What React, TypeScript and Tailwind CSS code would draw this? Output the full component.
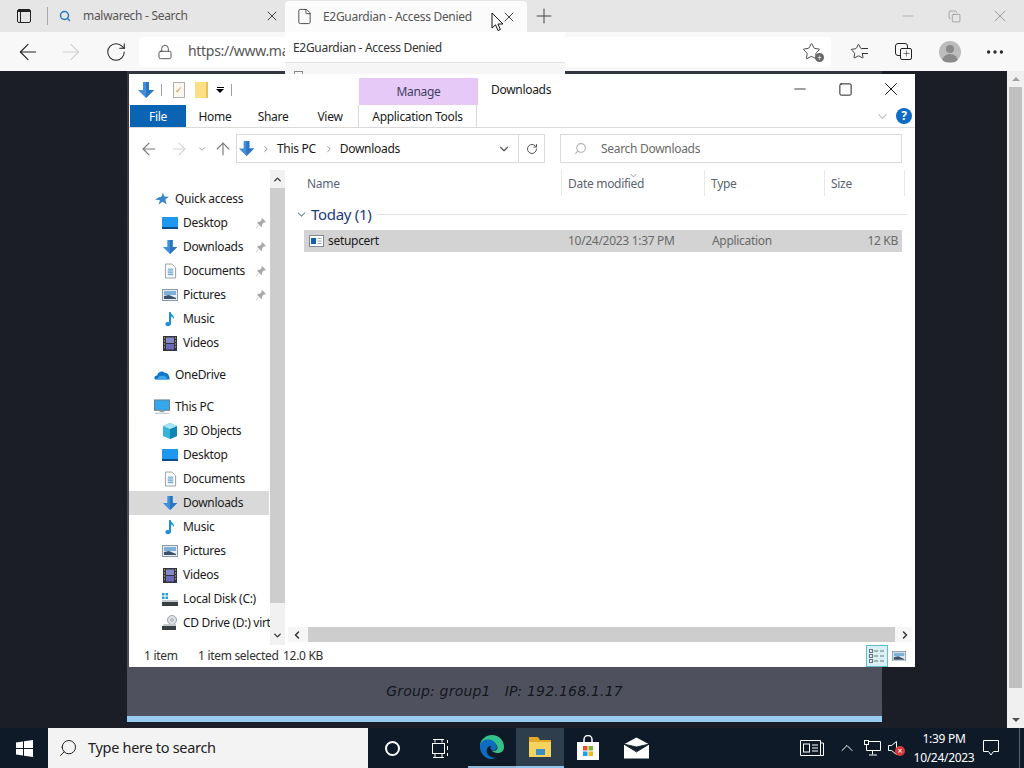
import type { ReactNode } from 'react';
import { ArrowLeft, ArrowRight, RotateCw, Lock, Search, X, Plus, File, ChevronDown, ChevronUp, ChevronLeft, ChevronRight, ArrowUp, Minus, Square, Copy, Star, Ellipsis, RotateCw as Refresh } from 'lucide-react';

const ArrowDownBlue = ({ s = 18 }: { s?: number }) => (
  <svg width={s} height={s} viewBox="0 0 18 18"><path d="M6 1h6v8h5l-8 8-8-8h5z" fill="#3f8fdc" /><path d="M9 1h3v8h5l-8 8z" fill="#2a74c0" /></svg>
);
const DesktopIcon = () => (
  <svg width="16" height="14" viewBox="0 0 16 14"><rect x="0" y="1" width="16" height="11" fill="#1f97ee" /><rect x="0" y="11" width="16" height="2" fill="#0c4f8c" /></svg>
);
const DocIcon = () => (
  <svg width="13" height="16" viewBox="0 0 14 16"><path d="M1.500.5h7l4 4v11h-11z" fill="#fff" stroke="#8a9aa8" /><path d="M4 6h6M4 8h6M4 10h6M4 12h6" stroke="#4a8ab8" /></svg>
);
const PicIcon = ({ w = 16 }: { w?: number }) => (
  <svg width={w} height={w * 0.75} viewBox="0 0 16 12"><rect x=".5" y=".5" width="15" height="11" fill="#e8eef4" stroke="#8a9aa8" /><rect x="2" y="2" width="12" height="4" fill="#7fb0d8" /><path d="M2 10V7l5-1 7 3v1z" fill="#38536a" /></svg>
);
const MusicIcon = () => (
  <svg width="14" height="16" viewBox="0 0 14 16"><path d="M6 1h1.600c.3 2.600 4.400 3.600 3.400 7.400C10.600 6.500 9 5.600 8 5.400V12.500C8 14.500 5.800 15.600 4 15.100 2 14.500 1.800 12 3.600 11.200 4.500 10.800 5.400 10.900 6 11.200z" fill="#1c8fd8" /></svg>
);
const VideoIcon = () => (
  <svg width="14" height="15" viewBox="0 0 14 15"><rect width="14" height="15" fill="#33333b" /><rect x="3" y="1.500" width="8" height="5.500" fill="#8888c8" /><rect x="3" y="8" width="8" height="5.500" fill="#6a68b8" /><path d="M1 2h1M1 5h1M1 8h1M1 11h1M12 2h1M12 5h1M12 8h1M12 11h1" stroke="#e8d878" /></svg>
);
const CubeIcon = () => (
  <svg width="16" height="16" viewBox="0 0 16 16"><path d="M8 0l7 3v10l-7 3-7-3V3z" fill="#34b4d8" /><path d="M8 6l7-3v10l-7 3z" fill="#0f86b8" /><path d="M8 0l7 3-7 3-7-3z" fill="#a8e4f4" /></svg>
);
const DiskIcon = () => (
  <svg width="16" height="15" viewBox="0 0 16 15"><path d="M0 1h2.500v2.500H0zM3.500 1H6v2.500H3.500zM0 4.500h2.500V7H0zM3.500 4.500H6V7H3.500z" fill="#21a0d8" /><rect y="8" width="16" height="2" fill="#c8ccd0" /><rect y="10" width="16" height="4" fill="#3a3f44" /></svg>
);
const CdIcon = () => (
  <svg width="16" height="16" viewBox="0 0 16 16"><circle cx="10" cy="5" r="4.500" fill="#dfe3e6" stroke="#9aa0a6" /><circle cx="10" cy="5" r="1.300" fill="#fff" stroke="#9aa0a6" /><path d="M2 9h12v2H0z" fill="#c8ccd0" /><rect y="11" width="14" height="4" fill="#3a3f44" /></svg>
);
const StarIcon = () => (
  <svg width="14" height="14" viewBox="0 0 14 14"><path d="M8 .5l1.300 4 4.700.2-3.700 2.900 1.300 4.900-3.900-2.800-4.200 2.800 1.500-4.300L0 7.500l3.900-2.300 2.300-.2z" fill="#3a86c8" /></svg>
);
const CloudIcon = () => (
  <svg width="18" height="12" viewBox="0 0 18 12"><path d="M1 11C-.5 8.500 1 6.500 3.500 6.500 4.500 2.500 9 .5 12 3.500c3-.5 6 3.500 5.500 7.500z" fill="#0f78c8" /><path d="M4 11c0-3 3-5 5.500-4 2-1 5 1 5.500 4z" fill="#3ea4e8" /></svg>
);
const MonitorIcon = () => (
  <svg width="17" height="16" viewBox="0 0 17 16"><rect x=".5" y=".5" width="16" height="11" fill="#34a8ec" stroke="#6a7a88" /><path d="M6 12h5v1.500H6z" fill="#98a2aa" /><path d="M1 14h15v1.500H1z" fill="#c8ced4" /></svg>
);
const PinIcon = () => (
  <svg width="10" height="10" viewBox="0 0 10 10"><path d="M6 0l4 4-1 .6-1-.3L6 6.500 6.200 8 5 9 3.200 6.800 0.500 10 0 9.500 3.200 6.800 1 5l1-1.200 1.500.2L5.700 2 5.400 1z" fill="#a8a8a8" /></svg>
);
const AppIcon = () => (
  <svg width="15" height="12" viewBox="0 0 15 12"><rect x=".5" y=".5" width="14" height="11" fill="#fff" stroke="#7f8a96" /><rect x="2" y="3" width="5" height="6" fill="#1560ac" /><path d="M8.500 3.500h4M8.500 6h4M8.500 8.500h4" stroke="#9aa6b0" /></svg>
);
const DetailsIcon = () => (
  <svg width="16" height="14" viewBox="0 0 16 14" fill="none" stroke="#707070"><rect x=".5" y=".5" width="3" height="3" /><rect x=".5" y="5.500" width="3" height="3" /><rect x=".5" y="10.500" width="3" height="3" /><path d="M5 2h4M11 2h4M5 7h4M11 7h4M5 12h4M11 12h4" /></svg>
);

const WinLogo = () => (
  <svg width="17" height="17" viewBox="0 0 17 17" fill="#fff"><path d="M0 2.400L7 1.400V8H0zM8 1.200L17 0V8H8zM0 9h7v6.600L0 14.600zM8 9h9v8L8 15.800z" /></svg>
);
const EdgeLogo = () => (
  <svg width="26" height="26" viewBox="0 0 26 26">
    <path d="M13 1C20 1 25 6 25 13c0 4-3 6-6.500 6-3 0-5-1.200-5.500-2.500 4 1 6-1.500 5.500-3.500C17.500 9.500 14 7.500 10.500 8 5.500 9 3 13 3 17 1.500 14 1 12.500 1 11 1.500 5.500 7 1 13 1z" fill="#35c28a" />
    <path d="M1 11c1-4 5-6 9-5.500 4 .5 8 3.500 8 7.500 0 2-2 3.500-5 3.500-1.500-1-2-3-1-4.500-3-.5-5 3-4 6.500 1 3 4 6 9 5-2 1-3.500 1.500-5 1.500C6 25 1 19 1 13z" fill="#0c6dc0" />
  </svg>
);
const FolderLogo = () => (
  <svg width="24" height="22" viewBox="0 0 24 22"><path d="M1 1h9l2 3h11v4H1z" fill="#e3a92a" /><rect x="1" y="6" width="22" height="15" fill="#f6d35e" /><rect x="8" y="13" width="9" height="6" fill="#3f8cc0" /></svg>
);
const StoreLogo = () => (
  <svg width="24" height="26" viewBox="0 0 24 26"><path d="M8 7V4.500a4 4 0 018 0V7" fill="none" stroke="#fff" strokeWidth="1.500" /><rect x="1" y="7" width="22" height="18" fill="#fff" /><rect x="7" y="11" width="4.500" height="4.500" fill="#e8502a" /><rect x="12.500" y="11" width="4.500" height="4.500" fill="#7cb82a" /><rect x="7" y="16.500" width="4.500" height="4.500" fill="#1da1e8" /><rect x="12.500" y="16.500" width="4.500" height="4.500" fill="#f8b81a" /></svg>
);
const MailLogo = () => (
  <svg width="25" height="22" viewBox="0 0 26 22"><path d="M0 7l13-7 13 7v15H0z" fill="#fff" /><path d="M0 7l13 8 13-8-13 3z" fill="#10202e" stroke="#10202e" strokeWidth="1" /></svg>
);
const TaskViewIcon = () => (
  <svg width="17" height="19" viewBox="0 0 17 19" fill="none" stroke="#fff"><path d="M1 .5h11M3 .5v3M10 .5v3M1 18.500h11M3 15v3.500M10 15v3.500" /><rect x=".5" y="4.500" width="12" height="10" /><path d="M15.500 1v3M15.500 7v4M15.500 14v3" /></svg>
);
const NewsIcon = () => (
  <svg width="24" height="16" viewBox="0 0 24 16" fill="none" stroke="#fff"><path d="M.5.5h20v15H.5zM20.500 3h3v12.500h-3" /><rect x="3.500" y="4" width="6" height="8" /><path d="M12 5h6M12 8h6M12 11h6" /></svg>
);
const NetworkIcon = () => (
  <svg width="17" height="16" viewBox="0 0 17 16" fill="none" stroke="#fff"><path d="M5 1.500h11.500v9H5M8.500 10.500v4M5 15h8" /><rect x=".5" y=".5" width="4" height="4" /><path d="M2.500 4.500v6H5" /></svg>
);
const SpeakerIcon = () => (
  <svg width="10" height="14" viewBox="0 0 10 14" fill="none" stroke="#fff"><path d="M.5 4.500h3l5-4v13l-5-4h-3z" /></svg>
);
const BubbleIcon = () => (
  <svg width="16" height="16" viewBox="0 0 16 16" fill="none" stroke="#fff"><path d="M.5.5h15v11h-5l-2.500 3.500-2.500-3.500h-5z" /></svg>
);

const navRows: { label: string; icon: ReactNode; top?: boolean; pin?: boolean; sel?: boolean; gap?: boolean }[] = [
  { label: 'Quick access', icon: <StarIcon />, top: true },
  { label: 'Desktop', icon: <DesktopIcon />, pin: true },
  { label: 'Downloads', icon: <ArrowDownBlue s={16} />, pin: true },
  { label: 'Documents', icon: <DocIcon />, pin: true },
  { label: 'Pictures', icon: <PicIcon />, pin: true },
  { label: 'Music', icon: <MusicIcon /> },
  { label: 'Videos', icon: <VideoIcon /> },
  { label: 'OneDrive', icon: <CloudIcon />, top: true, gap: true },
  { label: 'This PC', icon: <MonitorIcon />, top: true, gap: true },
  { label: '3D Objects', icon: <CubeIcon /> },
  { label: 'Desktop', icon: <DesktopIcon /> },
  { label: 'Documents', icon: <DocIcon /> },
  { label: 'Downloads', icon: <ArrowDownBlue s={16} />, sel: true },
  { label: 'Music', icon: <MusicIcon /> },
  { label: 'Pictures', icon: <PicIcon /> },
  { label: 'Videos', icon: <VideoIcon /> },
  { label: 'Local Disk (C:)', icon: <DiskIcon /> },
  { label: 'CD Drive (D:) virtio-win', icon: <CdIcon /> },
];

function Explorer() {
  return (
    <div className="absolute left-[129px] top-[3px] w-[786px] h-[593px] bg-white flex flex-col text-[12px] text-[#1a1a1a]">
      {/* title bar */}
      <div className="h-[31px] flex shrink-0">
        <div className="w-[230px] flex items-center pl-[8px]">
          <ArrowDownBlue />
          <div className="w-px h-[12px] bg-[#a0a0a0] ml-[6px]" />
          <div className="ml-[11px] w-[12px] h-[16px] border border-[#b0b0b0] bg-[#fbf7ef] flex items-center justify-center text-[9px] text-[#d8902a]">✓</div>
          <div className="ml-[10px] w-[13px] h-[16px] bg-[#fbdf85] border-r-2 border-[#e8bf50]" />
          <div className="ml-[8px] flex flex-col items-center gap-[1px]">
            <div className="w-[7px] h-px bg-black" />
            <div className="w-0 h-0 border-l-[4px] border-r-[4px] border-t-[4px] border-l-transparent border-r-transparent border-t-black" />
          </div>
          <div className="w-px h-[12px] bg-[#a0a0a0] ml-[7px]" />
        </div>
        <div className="w-[119px] h-[27px] self-end bg-[#e6c9f6] flex items-center justify-center text-[#3f3f5f]">Manage</div>
        <div className="ml-[13px] pt-[7px]">Downloads</div>
        <div className="ml-auto mr-px flex h-[30px]">
          <div className="w-[46px] flex items-center justify-center"><Minus size={18} strokeWidth={1} color="#000" /></div>
          <div className="w-[45px] flex items-center justify-center"><Square size={15} strokeWidth={1.4} color="#000" absoluteStrokeWidth={false} /></div>
          <div className="w-[46px] flex items-center justify-center"><X size={22} strokeWidth={1} color="#000" /></div>
        </div>
      </div>
      {/* ribbon tabs */}
      <div className="h-[23px] flex items-stretch shrink-0 border-b border-[#dadada] pl-px">
        <div className="w-[56px] pt-px bg-[#0b63b3] text-white flex items-center justify-center">File</div>
        <div className="w-[58px] pt-px flex items-center justify-center">Home</div>
        <div className="w-[58px] pt-px flex items-center justify-center">Share</div>
        <div className="w-[56px] pt-px flex items-center justify-center">View</div>
        <div className="w-[119px] pt-px border-x border-[#dadada] flex items-center justify-center">Application Tools</div>
        <div className="ml-auto flex items-center gap-[6px] pr-[3px]">
          <ChevronDown size={15} color="#c0c0c0" />
          <div className="w-[16px] h-[16px] rounded-full bg-[#0f6cc4] text-white text-[12px] font-bold flex items-center justify-center">?</div>
        </div>
      </div>
      {/* address row */}
      <div className="h-[42px] shrink-0 flex items-start pt-[6px]">
        <div className="w-[107px] h-[29px] flex items-center text-[#7a7a7a]">
          <ArrowLeft size={20} className="ml-[10px]" strokeWidth={1.4} />
          <ArrowRight size={20} className="ml-[10px]" color="#d4d4d4" strokeWidth={1.4} />
          <ChevronDown size={10} className="ml-[8px]" color="#909090" />
          <ArrowUp size={20} className="ml-[6px]" strokeWidth={1.4} />
        </div>
        <div className="w-[309px] h-[29px] border border-[#d9d9d9] flex items-center">
          <div className="ml-[1px]"><ArrowDownBlue s={17} /></div>
          <ChevronRight size={10} className="ml-[6px]" color="#808080" />
          <span className="ml-[6px]">This PC</span>
          <ChevronRight size={10} className="ml-[8px]" color="#808080" />
          <span className="ml-[6px]">Downloads</span>
          <ChevronDown size={14} className="ml-auto mr-[7px]" color="#555" />
          <div className="w-[26px] h-full border-l border-[#d9d9d9] flex items-center justify-center"><Refresh size={12} color="#555" /></div>
        </div>
        <div className="ml-[15px] w-[342px] h-[29px] border border-[#d9d9d9] flex items-center text-[#6a6a6a]">
          <Search size={13} className="ml-[13px] -scale-x-100" color="#b0b0b0" />
          <span className="ml-[14px]">Search Downloads</span>
        </div>
      </div>
      {/* panes */}
      <div className="flex-1 flex min-h-0">
        <div className="w-[141px] shrink-0 pt-[17px] overflow-hidden">
          {navRows.map((r, i) => (
            <div key={i} className={`h-6 flex items-center whitespace-nowrap mr-px ${r.gap ? 'mt-2' : ''} ${r.sel ? 'bg-[#d9d9d9]' : ''} ${r.top ? 'pl-[25px]' : 'pl-[33px]'}`}>
              <div className="w-4 flex justify-center shrink-0">{r.icon}</div>
              <span className="ml-[5px]">{r.label}</span>
              {r.pin && <div className="ml-auto mr-[3px]"><PinIcon /></div>}
            </div>
          ))}
        </div>
        <div className="w-[15px] shrink-0 bg-[#f1f1f1] flex flex-col items-center">
          <div className="h-[18px] flex items-center"><ChevronUp size={11} strokeWidth={3} color="#333" /></div>
          <div className="w-full h-[415px] bg-[#cdcdcd]" />
          <div className="mt-auto h-[19px] flex items-center"><ChevronDown size={11} strokeWidth={3} color="#333" /></div>
        </div>
        <div className="flex-1 flex flex-col relative min-w-0">
          <div className="h-[26px] flex items-stretch text-[#5a6472] shrink-0">
            <div className="w-[277px] pl-[22px] pt-[2px] flex items-center border-r border-[#e8e8e8]">Name</div>
            <div className="w-[143px] pl-[6px] pt-[2px] flex items-center border-r border-[#e8e8e8]">Date modified</div>
            <div className="w-[120px] pl-[6px] pt-[2px] flex items-center border-r border-[#e8e8e8]">Type</div>
            <div className="w-[80px] pl-[6px] pt-[2px] flex items-center border-r border-[#e8e8e8]">Size</div>
          </div>
          <ChevronDown size={11} className="absolute left-[343px] top-0" color="#909090" />
          <div className="mt-[8px] h-[20px] flex items-center pl-[10px] pr-[8px]">
            <ChevronDown size={13} color="#7a8a9a" />
            <span className="ml-[3px] text-[15px] text-[#1e3a78]">Today (1)</span>
            <div className="ml-[6px] flex-1 h-px bg-[#e2e2e2]" />
          </div>
          <div className="mt-[6px] ml-[19px] w-[598px] h-[22px] bg-[#d3d3d3] flex items-center">
            <div className="ml-[5px]"><AppIcon /></div>
            <span className="ml-[4px] w-[240px]">setupcert</span>
            <span className="w-[144px] text-[#6a6a6a]">10/24/2023 1:37 PM</span>
            <span className="text-[#6a6a6a]">Application</span>
            <span className="ml-auto mr-[4px] text-[#6a6a6a]">12 KB</span>
          </div>
          <div className="mt-auto mb-[3px] mx-[3px] h-[15px] flex items-center bg-[#f6f6f6]">
            <ChevronLeft size={12} strokeWidth={3} color="#333" className="ml-[3px]" />
            <div className="ml-[5px] w-[587px] h-full bg-[#cdcdcd]" />
            <ChevronRight size={12} strokeWidth={3} color="#333" className="ml-[4px]" />
          </div>
        </div>
      </div>
      {/* status bar */}
      <div className="h-[22px] shrink-0 flex items-center text-[#303030] whitespace-nowrap">
        <span className="ml-[15px] w-[54px]">1 item</span>
        <span className="w-[85px]">1 item selected</span>
        <span>12.0 KB</span>
        <div className="ml-auto mr-[9px] flex items-center gap-[4px]">
          <div className="w-[22px] h-[22px] border border-[#62bcc8] bg-[#d8f0f8] flex items-center justify-center"><DetailsIcon /></div>
          <PicIcon w={14} />
        </div>
      </div>
    </div>
  );
}

export default function App() {
  return (
    <div className="w-[1024px] h-[768px] overflow-hidden flex flex-col relative bg-[#1b1d27] tracking-[-0.3px] font-['Noto_Sans','Liberation_Sans',sans-serif]">
      {/* browser tab strip */}
      <div className="h-[32px] shrink-0 bg-[#e6e6e6] flex items-stretch text-[12px] text-[#555]">
        <div className="w-[47px] flex items-center justify-center">
          <div className="w-[14px] h-[14px] border-[1.5px] border-[#222] rounded-[2px] flex flex-col">
            <div className="h-[2px] bg-[#222]" />
            <div className="w-[3px] flex-1 border-r border-[#222]" />
          </div>
        </div>
        <div className="w-px h-[18px] bg-[#a8a8a8] self-center" />
        <div className="w-[237px] flex items-center">
          <Search size={12} strokeWidth={3} color="#2878c0" className="ml-[11px]" />
          <span className="ml-[12px]">malwarech - Search</span>
          <X size={16} className="ml-auto mr-[5px]" strokeWidth={1.4} color="#333" />
        </div>
        <div className="w-[242px] mt-px rounded-t-[4px] bg-[#fbfbfb] flex items-center">
          <File size={17} strokeWidth={1.2} color="#333" className="ml-[11px]" />
          <span className="ml-[10px]">E2Guardian - Access Denied</span>
          <X size={16} className="ml-auto mr-[10px]" strokeWidth={1.4} color="#333" />
        </div>
        <div className="w-[33px] flex items-center justify-center"><Plus size={24} strokeWidth={1} color="#444" /></div>
        <div className="ml-auto flex">
          <div className="w-[46px] flex items-center justify-center"><Minus size={18} strokeWidth={1} color="#a0a0a0" /></div>
          <div className="w-[46px] flex items-center justify-center"><Copy size={13} strokeWidth={1.2} color="#808080" /></div>
          <div className="w-[46px] flex items-center justify-center mr-px"><X size={20} strokeWidth={1} color="#909090" /></div>
        </div>
      </div>
      {/* browser toolbar */}
      <div className="h-[39px] shrink-0 bg-[#f8f8f8] flex items-center">
        <div className="w-[139px] flex items-center text-[#222]">
          <ArrowLeft size={26} strokeWidth={1} className="ml-[15px]" />
          <ArrowRight size={26} strokeWidth={1} color="#d0d0d0" className="ml-[17px]" />
          <RotateCw size={22} strokeWidth={1.1} className="ml-[21px]" />
        </div>
        <div className="w-[692px] h-[30px] bg-white rounded-[3px] flex items-center text-[14px] text-[#555]">
          <Lock size={16} strokeWidth={1.2} color="#333" className="ml-[18px]" />
          <span className="ml-[15px] -mt-[2px]">https://www.ma</span>
          <div className="ml-auto mr-[10px] relative">
            <Star size={19} strokeWidth={1.1} color="#333" />
            <div className="absolute -right-[3px] -bottom-[1px] w-[9px] h-[9px] rounded-full bg-[#666] text-white text-[8px] leading-[9px] text-center">+</div>
          </div>
        </div>
        <div className="ml-[19px] relative w-[20px] flex items-center">
          <Star size={17} strokeWidth={1.2} color="#222" />
          <div className="absolute left-[12px] top-[5px] w-[6px] h-[6px] border-y border-[#333] bg-[#f8f8f8]" />
        </div>
        <div className="ml-[25px] relative w-[18px] h-[18px]">
          <div className="absolute left-0 top-0 w-[13px] h-[13px] border border-[#222] rounded-[3px]" />
          <div className="absolute left-[5px] top-[5px] w-[12px] h-[12px] border border-[#222] rounded-[2px] bg-[#f8f8f8] flex items-center justify-center"><Plus size={9} strokeWidth={1.5} color="#222" /></div>
        </div>
        <div className="ml-[26px] w-[22px] h-[22px] rounded-full bg-[#bcbcbc] flex flex-col items-center overflow-hidden">
          <div className="mt-[4px] w-[8px] h-[8px] rounded-full bg-[#8a8a8a]" />
          <div className="mt-[1px] w-[16px] h-[8px] rounded-t-full bg-[#8a8a8a]" />
        </div>
        <Ellipsis size={22} strokeWidth={1.6} color="#222" className="ml-[23px]" />
      </div>
      {/* page behind the window */}
      <div className="flex-1 relative flex min-h-0 bg-[#1b1d27]">
        <div className="flex-1 pl-[127px] pr-[125px] flex flex-col">
          <div className="flex-1 bg-gradient-to-b from-[#33353f] to-[#50535f] flex flex-col justify-end">
            <div className="mb-[14px] text-center text-[14px] italic tracking-[0.2px] text-[#14161e] font-['DejaVu_Sans',sans-serif]">Group: group1 &nbsp; IP: 192.168.1.17</div>
            <div className="h-[6px] bg-[#99caf0]" />
          </div>
          <div className="h-[6px]" />
        </div>
        <div className="w-[17px] shrink-0 bg-[#f0f0f0] flex flex-col items-center">
          <div className="h-[16px] flex items-center"><div className="w-0 h-0 border-l-[4px] border-r-[4px] border-b-[4px] border-l-transparent border-r-transparent border-b-[#a0a0a0]" /></div>
          <div className="w-[13px] h-[601px] bg-[#c0c0c0]" />
          <div className="mt-auto h-[17px] flex items-center"><div className="w-0 h-0 border-l-[4px] border-r-[4px] border-t-[4px] border-l-transparent border-r-transparent border-t-[#505050]" /></div>
        </div>
        <Explorer />
      </div>
      {/* taskbar */}
      <div className="h-[40px] shrink-0 bg-[#0e1a28] flex items-stretch text-white">
        <div className="w-[48px] flex items-center justify-center"><WinLogo /></div>
        <div className="w-[320px] bg-[#f3f3f3] flex items-center text-[#222]">
          <Search size={20} strokeWidth={1.2} className="ml-[10px] -scale-x-100" color="#222" />
          <span className="ml-[10px] text-[14.5px]">Type here to search</span>
        </div>
        <div className="w-12 flex items-center justify-center"><div className="w-[15px] h-[15px] rounded-full border-2 border-white" /></div>
        <div className="w-12 flex items-center justify-center"><TaskViewIcon /></div>
        <div className="w-12 ml-[4px] flex items-center justify-center border-b-2 border-[#8fb8d8]"><EdgeLogo /></div>
        <div className="w-12 flex items-center justify-center bg-[#2f3e4c] border-b-2 border-[#8fc4ec]"><FolderLogo /></div>
        <div className="w-12 flex items-center justify-center"><StoreLogo /></div>
        <div className="w-12 flex items-center justify-center"><MailLogo /></div>
        <div className="ml-auto flex items-center">
          <NewsIcon />
          <ChevronUp size={20} strokeWidth={1.2} className="ml-[13px]" />
          <div className="ml-[7px]"><NetworkIcon /></div>
          <div className="ml-[7px] w-[17px] h-[16px] relative flex items-center">
            <SpeakerIcon />
            <div className="absolute right-0 bottom-0 w-[10px] h-[10px] rounded-full bg-[#d83b3b] text-[8px] leading-[10px] text-center">×</div>
          </div>
          <div className="w-[78px] flex flex-col items-center text-[12px] leading-[19px]">
            <span>1:39 PM</span>
            <span>10/24/2023</span>
          </div>
          <BubbleIcon />
          <div className="ml-[20px] w-px h-full bg-[#5a6470]" />
          <div className="w-[4px]" />
        </div>
      </div>
      {/* tab hover card */}
      <div className="absolute left-[285px] top-[32px] w-[280px] h-[42px] bg-white text-[12px] text-[#333]">
        <div className="h-[31px] flex items-center pl-[8px] pt-[1px] border-b border-[#e4e4e4]">E2Guardian - Access Denied</div>
        <div className="h-[11px] bg-[#f6f6f6] pl-[9px] pt-[8px]"><div className="w-[9px] h-[3px] border-x border-t border-[#888]" /></div>
      </div>
      {/* mouse pointer */}
      <svg className="absolute left-[491px] top-[12px]" width="13" height="20" viewBox="0 0 13 20">
        <path d="M1 1v15l3.500-3.200 2.500 5.700 2.400-1-2.500-5.500H12z" fill="#fff" stroke="#111" strokeWidth="1" />
      </svg>
    </div>
  );
}
